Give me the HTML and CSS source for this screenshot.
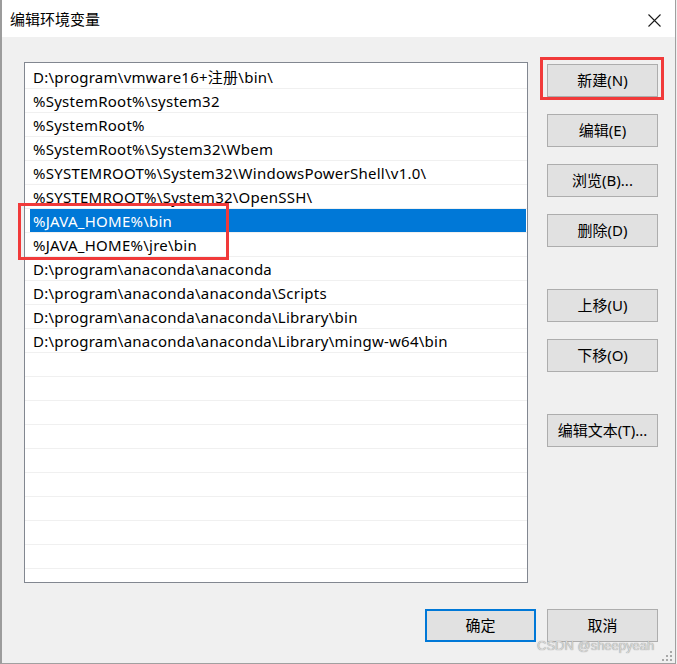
FILE: index.html
```html
<!DOCTYPE html>
<html lang="zh-CN">
<head>
<meta charset="utf-8">
<title>编辑环境变量</title>
<link rel="stylesheet" href="styles.css">
</head>
<body>
<div class="window">
  <div class="titlebar">
    <span class="title">编辑环境变量</span>
    <span class="close">
      <svg width="13" height="13" viewBox="0 0 13 13"><path d="M0.5 0.5 L12.5 12.5 M12.5 0.5 L0.5 12.5" stroke="#1a1a1a" stroke-width="1.1" fill="none"/></svg>
    </span>
  </div>
  <div class="content">
    <div class="list">
      <div class="row"><span class="cell">D:\program\vmware16+注册\bin\</span></div>
      <div class="row"><span class="cell">%SystemRoot%\system32</span></div>
      <div class="row"><span class="cell">%SystemRoot%</span></div>
      <div class="row"><span class="cell">%SystemRoot%\System32\Wbem</span></div>
      <div class="row"><span class="cell">%SYSTEMROOT%\System32\WindowsPowerShell\v1.0\</span></div>
      <div class="row"><span class="cell">%SYSTEMROOT%\System32\OpenSSH\</span></div>
      <div class="row"><span class="cell selected">%JAVA_HOME%\bin</span></div>
      <div class="row"><span class="cell">%JAVA_HOME%\jre\bin</span></div>
      <div class="row"><span class="cell">D:\program\anaconda\anaconda</span></div>
      <div class="row"><span class="cell">D:\program\anaconda\anaconda\Scripts</span></div>
      <div class="row"><span class="cell">D:\program\anaconda\anaconda\Library\bin</span></div>
      <div class="row"><span class="cell">D:\program\anaconda\anaconda\Library\mingw-w64\bin</span></div>
      <div class="row"><span class="cell"></span></div>
      <div class="row"><span class="cell"></span></div>
      <div class="row"><span class="cell"></span></div>
      <div class="row"><span class="cell"></span></div>
      <div class="row"><span class="cell"></span></div>
      <div class="row"><span class="cell"></span></div>
      <div class="row"><span class="cell"></span></div>
      <div class="row"><span class="cell"></span></div>
      <div class="row"><span class="cell"></span></div>
    </div>
    <div class="side">
      <button class="btn">新建(N)</button>
      <button class="btn">编辑(E)</button>
      <button class="btn">浏览(B)...</button>
      <button class="btn">删除(D)</button>
      <button class="btn gap">上移(U)</button>
      <button class="btn">下移(O)</button>
      <button class="btn gap">编辑文本(T)...</button>
    </div>
  </div>
  <div class="footer">
    <button class="btn default">确定</button>
    <button class="btn">取消</button>
  </div>
  <div class="mark mark-java"></div>
  <div class="mark mark-new"></div>
  <div class="watermark">CSDN @sheepyeah</div>
  <svg class="grip" width="10" height="10" viewBox="0 0 10 10">
    <rect x="8" y="0" width="2" height="2" fill="#a8a8a8"/>
    <rect x="4" y="4" width="2" height="2" fill="#a8a8a8"/>
    <rect x="8" y="4" width="2" height="2" fill="#a8a8a8"/>
    <rect x="0" y="8" width="2" height="2" fill="#a8a8a8"/>
    <rect x="4" y="8" width="2" height="2" fill="#a8a8a8"/>
    <rect x="8" y="8" width="2" height="2" fill="#a8a8a8"/>
  </svg>
</div>
</body>
</html>
```

FILE: styles.css
```css
html, body {
  margin: 0;
  padding: 0;
  background: #f0f0f0;
}

body {
  font-family: "Noto Sans", "Noto Sans CJK SC", sans-serif;
  font-size: 15px;
  color: #000;
}

.window {
  position: relative;
  width: 676px;
  height: 664px;
  box-sizing: border-box;
  background: #f0f0f0;
  border-left: 2px solid #9c9c9c;
  border-right: 1px solid #a0a0a0;
  border-bottom: 1px solid #a0a0a0;
  display: flex;
  flex-direction: column;
}

.titlebar {
  height: 37px;
  background: #fff;
  display: flex;
  align-items: center;
  justify-content: space-between;
  padding: 0 14px 0 8px;
  flex-shrink: 0;
}

.title {
  font-family: "Noto Sans CJK SC", sans-serif;
  font-size: 15px;
  line-height: 20px;
  color: #000;
}

.close {
  display: flex;
  width: 13px;
  height: 13px;
  margin-top: 3px;
}

.content {
  display: flex;
  align-items: flex-start;
  padding: 25px 0 0 22px;
}

.list {
  width: 504px;
  height: 521px;
  box-sizing: border-box;
  border: 1px solid #828790;
  background: #fff;
  padding-top: 2px;
  overflow: hidden;
}

.row {
  height: 23px;
  border-bottom: 1px solid #f0f0f0;
  display: flex;
  padding: 0 1px 0 5px;
}

.cell {
  flex: 1;
  padding: 1px 0 0 3px;
  line-height: 22px;
  letter-spacing: 0.25px;
  white-space: nowrap;
  color: #000;
}

.cell.selected {
  background: #0078d7;
  color: #fff;
}

.side {
  display: flex;
  flex-direction: column;
  gap: 17px;
  margin-left: 19px;
  padding-top: 2px;
}

.btn {
  width: 111px;
  height: 33px;
  box-sizing: border-box;
  border: 1px solid #adadad;
  background: #e1e1e1;
  font-family: "Noto Sans", "Noto Sans CJK SC", sans-serif;
  font-size: 15px;
  color: #000;
  padding: 0;
  line-height: 31px;
  text-align: center;
}

.btn.gap {
  margin-top: 25px;
}

.btn.default {
  border: 2px solid #0078d7;
  line-height: 29px;
}

.footer {
  display: flex;
  justify-content: flex-end;
  gap: 11px;
  padding: 26px 17px 0 0;
}

.mark {
  position: absolute;
  box-sizing: border-box;
  border: 3px solid #f13a3a;
}

.mark-java {
  left: 16px;
  top: 203px;
  width: 211px;
  height: 57px;
}

.mark-new {
  left: 538px;
  top: 57px;
  width: 124px;
  height: 43px;
}

.watermark {
  position: absolute;
  left: 535px;
  top: 638px;
  font-family: "Liberation Sans", sans-serif;
  font-size: 13px;
  line-height: 15px;
  color: #d8d8d8;
  text-shadow: 0 0 1px #7a7a7a;
}

.grip {
  position: absolute;
  right: 3px;
  bottom: 2px;
}
```
